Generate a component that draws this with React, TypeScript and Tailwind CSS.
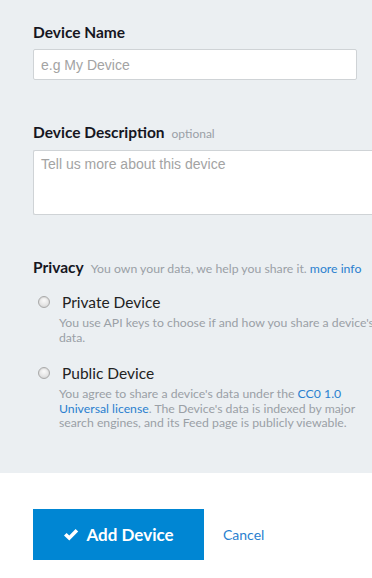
import React from "react";

function Radio() {
  return (
    <span className="mt-[4px] block h-[12px] w-[12px] shrink-0 rounded-full border border-[#a9a9a9] bg-[radial-gradient(circle_at_50%_35%,#fafafa_0%,#e6e6e6_55%,#c9c9c9_100%)] shadow-[inset_0_1px_1px_rgba(0,0,0,0.08)]" />
  );
}

export default function App() {
  const sans = "font-['Lato','Noto_Sans',sans-serif]";
  return (
    <div className={`w-[372px] h-[578px] overflow-hidden bg-white ${sans}`}>
      <div className="h-[473px] bg-[#ebeff2] pl-[33px] pt-[22px]">
        <div className="text-[15.5px] leading-[20px] font-bold text-[#16161f]">Device Name</div>
        <input
          className="mt-[7px] block h-[31px] w-[324px] rounded-[2px] border border-[#cfd3d6] bg-white px-[7px] font-['Liberation_Sans',Arial,sans-serif] text-[14px] text-[#333] placeholder:text-[#a3a3a3] outline-none"
          placeholder="e.g My Device"
        />

        <div className="mt-[42px] flex items-baseline gap-[7px]">
          <span className="text-[15.5px] leading-[20px] font-bold text-[#16161f]">Device Description</span>
          <span className="text-[12px] text-[#9aa0a6]">optional</span>
        </div>
        <textarea
          className="mt-[7px] block h-[65px] w-[360px] resize-none rounded-[2px] border border-r-0 border-[#cfd3d6] bg-white px-[7px] py-[4px] font-['Liberation_Sans',Arial,sans-serif] text-[14px] leading-[18px] text-[#333] placeholder:text-[#a3a3a3] outline-none"
          placeholder="Tell us more about this device"
        />

        <div className="mt-[42px] flex items-baseline gap-[7px] whitespace-nowrap">
          <span className="text-[15.5px] leading-[20px] font-bold text-[#16161f]">Privacy</span>
          <span className="text-[12.25px] text-[#9aa0a6]">
            You own your data, we help you share it. <span className="text-[#2a7fcf]">more info</span>
          </span>
        </div>

        <div className="mt-[14px]">
          <div className="flex items-start">
            <div className="ml-[5px] mr-[12px]"><Radio /></div>
            <span className="text-[15.5px] leading-[20px] text-[#222]">Private Device</span>
          </div>
          <p className="mt-[4px] pl-[26px] pr-0 text-[12.25px] leading-[14.5px] text-[#9aa0a6] whitespace-nowrap">
            You use API keys to choose if and how you share a device's
            <br />
            data.
          </p>
        </div>

        <div className="mt-[18px]">
          <div className="flex items-start">
            <div className="ml-[5px] mr-[12px]"><Radio /></div>
            <span className="text-[15.5px] leading-[20px] text-[#222]">Public Device</span>
          </div>
          <p className="mt-[4px] pl-[26px] text-[12.25px] leading-[14.5px] text-[#9aa0a6] whitespace-nowrap">
            You agree to share a device's data under the <span className="text-[#2a7fcf]">CC0 1.0</span>
            <br />
            <span className="text-[#2a7fcf]">Universal license</span>. The Device's data is indexed by major
            <br />
            search engines, and its Feed page is publicly viewable.
          </p>
        </div>
      </div>

      <div className="flex items-center pl-[33px] pt-[36px]">
        <button className="flex h-[51px] w-[171px] items-center justify-center gap-[7px] bg-[#0086d3] text-[17px] font-bold text-white">
          <svg width="16" height="14" viewBox="0 0 16 14" fill="white">
            <path d="M1 7.5 L3.6 5 L6.3 7.6 L12.6 1 L15.2 3.5 L6.3 12.6 Z" />
          </svg>
          Add Device
        </button>
        <span className="ml-[19px] text-[14px] text-[#2a7fcf]">Cancel</span>
      </div>
    </div>
  );
}
